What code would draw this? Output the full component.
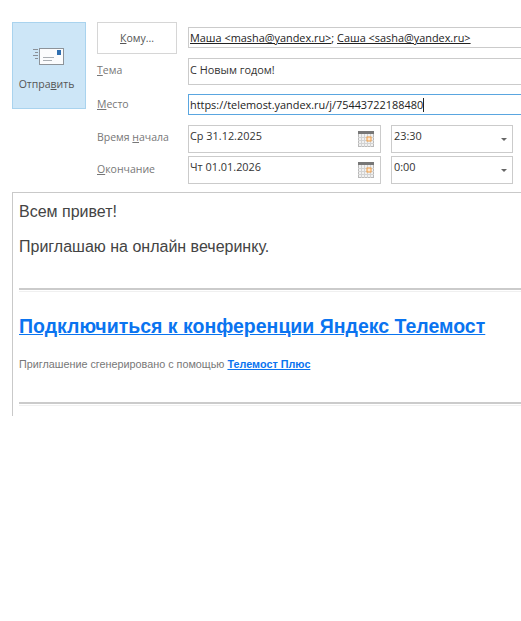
<div class="page">
  <div class="form">
    <button class="send">
      <svg class="send-icon" width="31" height="18" viewBox="0 0 31 18">
        <path d="M0 1.5h5M2 4.5h3M0 7.5h5M2 10.5h3" stroke="#8a9097" fill="none" />
        <rect x="6.5" y="0.5" width="24" height="16" fill="#fbfcfd" stroke="#8d9399" />
        <rect x="24" y="2" width="4" height="5" fill="#2f6fb0" />
        <path d="M10 9.5h11M10 12.5h9" stroke="#a9aeb3" fill="none" />
      </svg>
      <span class="send-text">Отпра<u>в</u>ить</span>
    </button>

    <div class="fields">
      <div class="row to-row">
        <button class="to"><u>К</u>ому...</button>
        <div class="box recipients"><u>Маша &lt;masha@yandex.ru&gt;</u>; <u>Саша &lt;sasha@yandex.ru&gt;</u></div>
      </div>
      <div class="row subject-row">
        <span class="label"><u>Т</u>ема</span>
        <div class="box subject">С Новым годом!</div>
      </div>
      <div class="row place-row">
        <span class="label"><u>М</u>есто</span>
        <div class="box place">https://telemost.yandex.ru/j/75443722188480<i class="caret"></i></div>
      </div>
      <div class="row time-row start">
        <span class="label">Время <u>н</u>ачала</span>
        <div class="box date">Ср 31.12.2025
          <svg class="cal" width="16" height="16" viewBox="0 0 16 16">
            <rect x="0.5" y="0.5" width="15" height="15" fill="#f1f1f1" stroke="#b9b9b9" />
            <rect x="0" y="0" width="16" height="3" fill="#777" />
            <path d="M0 6.5h16M0 9.5h16M0 12.5h16M3.5 3v13M6.5 3v13M9.5 3v13M12.5 3v13" stroke="#d2d2d2" fill="none" />
            <rect x="9" y="6" width="4" height="4" fill="#fde9d2" stroke="#ee9b45" />
          </svg>
        </div>
        <div class="box time">23:30<i class="arrow"></i></div>
      </div>
      <div class="row time-row end">
        <span class="label"><u>О</u>кончание</span>
        <div class="box date">Чт 01.01.2026
          <svg class="cal" width="16" height="16" viewBox="0 0 16 16">
            <rect x="0.5" y="0.5" width="15" height="15" fill="#f1f1f1" stroke="#b9b9b9" />
            <rect x="0" y="0" width="16" height="3" fill="#777" />
            <path d="M0 6.5h16M0 9.5h16M0 12.5h16M3.5 3v13M6.5 3v13M9.5 3v13M12.5 3v13" stroke="#d2d2d2" fill="none" />
            <rect x="9" y="6" width="4" height="4" fill="#fde9d2" stroke="#ee9b45" />
          </svg>
        </div>
        <div class="box time">0:00<i class="arrow"></i></div>
      </div>
    </div>
  </div>

  <div class="body">
    <p class="greet">Всем привет!</p>
    <p class="invite">Приглашаю на онлайн вечеринку.</p>
    <hr class="rule-one" />
    <a class="join" href="#join">Подключиться к конференции Яндекс Телемост</a>
    <p class="note">Приглашение сгенерировано с помощью <a href="#plus">Телемост Плюс</a></p>
    <hr class="rule-two" />
  </div>
</div>

<style>
  :global(body) {
    margin: 0;
    background: #fff;
  }
  .page {
    width: 521px;
    height: 621px;
    overflow: hidden;
    padding-top: 22px;
    box-sizing: border-box;
    font-family: "Open Sans", "Noto Sans", sans-serif;
    font-size: 10.5px;
    color: #555;
  }
  .form {
    display: flex;
    align-items: flex-start;
    padding-left: 12px;
    gap: 11px;
    height: 170px;
  }
  .send {
    width: 74px;
    height: 87px;
    flex: none;
    background: #cde6f7;
    border: 1px solid #a9d3ee;
    padding: 0;
    display: flex;
    flex-direction: column;
    align-items: center;
    font: inherit;
    color: #555;
  }
  .send-icon {
    margin-top: 25px;
    margin-bottom: 11px;
    margin-right: 2px;
  }
  .send-text {
    margin-right: 5px;
  }
  .fields {
    flex: 1;
    min-width: 0;
    display: flex;
    flex-direction: column;
  }
  .row {
    display: flex;
    align-items: flex-start;
  }
  .label {
    width: 91px;
    flex: none;
    color: #777;
  }
  .box {
    box-sizing: border-box;
    border: 1px solid #cbcbcb;
    background: #fff;
    padding-left: 1px;
    color: #333;
    position: relative;
    line-height: 15px;
    font-size: 10.9px;
  }
  .to {
    width: 80px;
    height: 32px;
    margin-right: 11px;
    flex: none;
    box-sizing: border-box;
    background: #fff;
    border: 1.5px solid #d6d6d6;
    font: inherit;
    color: #555;
    padding: 0;
  }
  .recipients {
    flex: 1;
    height: 21px;
    margin-top: 5px;
    border-right: none;
    padding-top: 2px;
    color: #222;
  }
  .subject-row {
    margin-top: 4px;
    height: 27px;
  }
  .subject-row .label {
    padding-top: 5px;
  }
  .subject {
    flex: 1;
    height: 27px;
    border-right: none;
    padding-top: 3px;
  }
  .place-row {
    margin-top: 9px;
    height: 21px;
  }
  .place-row .label {
    padding-top: 3px;
  }
  .place {
    flex: 1;
    height: 21px;
    border: 1px solid #5aa6e0;
    border-right: none;
    padding-left: 1px;
    padding-top: 2px;
    color: #222;
  }
  .caret {
    display: inline-block;
    width: 1px;
    height: 14px;
    background: #222;
    vertical-align: -3px;
  }
  .time-row {
    height: 28px;
  }
  .start {
    margin-top: 10px;
  }
  .end {
    margin-top: 3px;
  }
  .start .label {
    padding-top: 5px;
  }
  .end .label {
    padding-top: 6px;
  }
  .date {
    width: 193px;
    height: 28px;
    flex: none;
    padding-top: 2px;
  }
  .cal {
    position: absolute;
    right: 6px;
    top: 5px;
  }
  .time {
    width: 122px;
    height: 28px;
    margin-left: 10px;
    flex: none;
    padding-top: 2px;
    padding-left: 2px;
  }
  .arrow {
    position: absolute;
    right: 5px;
    top: 12px;
    width: 0;
    height: 0;
    border-left: 3.5px solid transparent;
    border-right: 3.5px solid transparent;
    border-top: 3.5px solid #666;
  }
  .body {
    margin-left: 12px;
    height: 224px;
    box-sizing: border-box;
    border-top: 1px solid #c9c9c9;
    border-left: 1px solid #c9c9c9;
    padding-left: 6px;
    font-family: "Liberation Sans", Arial, sans-serif;
    color: #444;
  }
  p {
    margin: 0;
  }
  .greet {
    font-size: 16px;
    line-height: 18px;
    margin-top: 10px;
  }
  .invite {
    font-size: 16px;
    line-height: 18px;
    margin-top: 17px;
  }
  hr {
    margin: 0;
    height: 1px;
    border: 0;
    border-top: 2px solid #cbcbcb;
    border-bottom: 1px solid #f0f0f0;
  }
  .rule-one {
    margin-top: 32px;
  }
  .join {
    display: block;
    margin-top: 22px;
    font-size: 19.5px;
    line-height: 24px;
    font-weight: 700;
    color: #0a74f0;
    white-space: nowrap;
  }
  .note {
    margin-top: 19px;
    font-size: 10.8px;
    line-height: 14px;
    color: #777;
  }
  .note a {
    color: #0a74f0;
    font-weight: 700;
  }
  .rule-two {
    margin-top: 31px;
  }
</style>
